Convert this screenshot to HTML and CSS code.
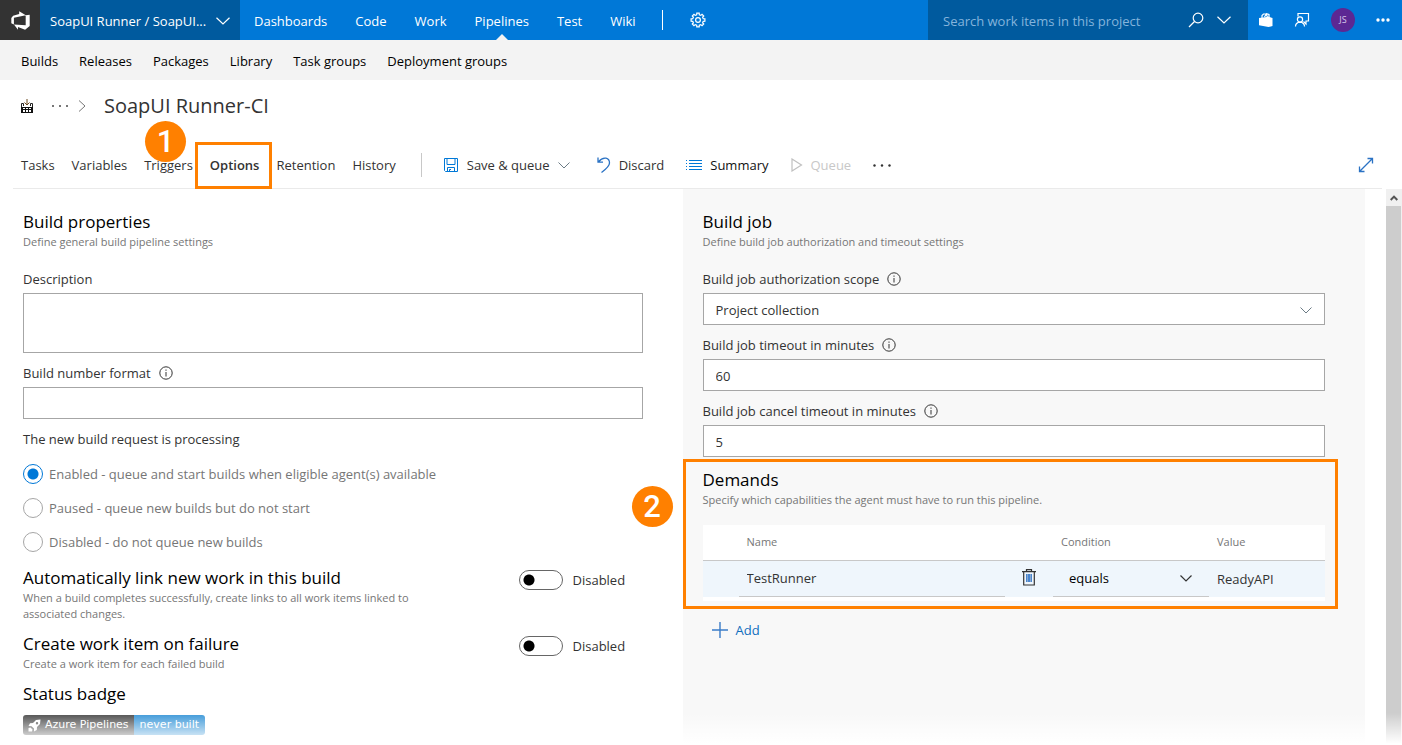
FILE: index.html
```
<!DOCTYPE html>
<html lang="en">
<head>
<meta charset="utf-8">
<title>SoapUI Runner-CI - Azure Pipelines</title>
<link rel="stylesheet" href="styles.css">
</head>
<body>
<header class="topbar">
  <a class="logo" href="#" aria-label="Azure DevOps">
    <svg width="21" height="21" viewBox="0 0 16 16"><path fill="#fff" d="M15 3.622v8.512L11.500 15l-5.425-1.975v1.958L3.004 10.970l8.951.7V4.005L15 3.622zm-2.984.428L6.994 1v2.001L2.382 4.356 1 6.130v4.029l1.978.873V5.869l9.038-1.818z"/></svg>
  </a>
  <button class="project" type="button">SoapUI Runner / SoapUI...
    <svg width="14" height="8" viewBox="0 0 14 8"><path class="line" d="M.5.7 7 7 13.500.7"/></svg>
  </button>
  <nav class="hubs">
    <a href="#">Dashboards</a>
    <a href="#">Code</a>
    <a href="#">Work</a>
    <a href="#" class="hub-current">Pipelines</a>
    <a href="#">Test</a>
    <a href="#">Wiki</a>
  </nav>
  <span class="hub-rule"></span>
  <button class="icon-button" type="button" aria-label="Settings">
    <svg width="16" height="16" viewBox="-8 -8 16 16"><path class="line" d="M5.200-1.300 6.900-1.200V1.200L5.200 1.300 4.600 2.760 5.730 4.030 4.030 5.730 2.760 4.600 1.300 5.200 1.200 6.900H-1.200L-1.300 5.200-2.760 4.600-4.030 5.730-5.730 4.030-4.600 2.760-5.200 1.300-6.900 1.200V-1.200L-5.200-1.300-4.600-2.760-5.730-4.030-4.030-5.730-2.760-4.600-1.300-5.200-1.200-6.900H1.200L1.300-5.200 2.760-4.600 4.030-5.730 5.730-4.030 4.600-2.760z"/><circle r="2.400" class="line"/></svg>
  </button>
  <form class="search">
    <input type="text" placeholder="Search work items in this project" aria-label="Search work items in this project">
    <button type="button" aria-label="Search"><svg width="16" height="16" viewBox="0 0 16 16"><circle class="line" cx="10" cy="6" r="4.800"/><path class="line" d="M6.500 9.500 1 15"/></svg></button>
    <button type="button" aria-label="Search options"><svg width="14" height="8" viewBox="0 0 14 8"><path class="line" d="M.5.7 7 7 13.500.7"/></svg></button>
  </form>
  <div class="account">
    <button class="icon-button" type="button" aria-label="Marketplace"><svg width="14" height="14" viewBox="0 0 14 14"><path fill="#fff" d="M0 5 9.500 3.700 13.500 5V13L9.500 14 0 12.200z"/><path class="line" d="M3 5V2.500L4.500 1H7l1.500 3M5.500 4 7.500.8 10 1.500V4"/></svg></button>
    <button class="icon-button" type="button" aria-label="Feedback"><svg width="16" height="16" viewBox="0 0 16 16"><path class="line" d="M4 4.500V1.500h10.500V9H12v3L9.500 9.500"/><circle class="line" cx="6" cy="7.500" r="2.600"/><path class="line" d="M1.500 14.500q0-4 4.500-4.400 4.500.4 4.500 4.400"/></svg></button>
    <button class="avatar" type="button">JS</button>
    <button class="icon-button" type="button" aria-label="More"><svg width="14" height="4" viewBox="0 0 14 4"><g fill="#fff"><circle cx="2" cy="2" r="1.700"/><circle cx="7" cy="2" r="1.700"/><circle cx="12" cy="2" r="1.700"/></g></svg></button>
  </div>
</header>

<nav class="subnav">
  <a href="#">Builds</a>
  <a href="#">Releases</a>
  <a href="#">Packages</a>
  <a href="#">Library</a>
  <a href="#">Task groups</a>
  <a href="#">Deployment groups</a>
</nav>

<div class="crumbs">
  <svg width="14" height="16" viewBox="0 0 14 16"><path fill="#111" fill-rule="evenodd" d="M1 9h12v6H1zM3 10v1h2v-1zm3 0v1h2v-1zm3 0v1h2v-1zM3 12v2h2v-2zm3 0v2h2v-2zm3 0v2h2v-2z"/><path fill="none" stroke="#222" d="M1.500 9V5.500h2V8M12.500 9V5.500h-2V8"/><path fill="none" stroke="#6d4a20" d="M7 1v6M4.500 4.500 7 7l2.500-2.500"/></svg>
  <button class="crumb-more" type="button" aria-label="Show path"><svg width="16" height="2" viewBox="0 0 16 2"><path fill="#777" d="M0 0h2v2H0zM7 0h2v2H7zM14 0h2v2h-2z"/></svg></button>
  <svg width="8" height="12" viewBox="0 0 8 12"><path fill="none" stroke="#777" d="m1 .5 6 5.500-6 5.500"/></svg>
  <h1>SoapUI Runner-CI</h1>
</div>

<div class="toolbar">
  <nav class="tabs">
    <a href="#">Tasks</a>
    <a href="#">Variables</a>
    <a href="#">Triggers<span class="step step-one">1</span></a>
    <a href="#" class="tab-current">Options<span class="frame frame-tab"></span></a>
    <a href="#">Retention</a>
    <a href="#">History</a>
  </nav>
  <span class="toolbar-rule"></span>
  <div class="commands">
    <button type="button" class="menu-command"><svg width="16" height="16" viewBox="0 0 16 16"><path class="blue" d="M1.500 1.500h13v13h-12l-1-1zM4 1.500v6h8v-6M4.500 14.500v-4h7v4M6.500 14.500V12.500H8"/></svg>Save &amp; queue<svg width="12" height="7" viewBox="0 0 12 7"><path fill="none" stroke="#6b7b85" d="m.5.5 5.500 5.500L11.500.5"/></svg></button>
    <button type="button"><svg width="14" height="18" viewBox="0 0 14 18"><path class="blue wide" d="M1 1.500V6.200h5M1.300 6Q5 1.500 9 2.200 12.500 3 12.500 7q0 3.500-8 9.500"/></svg>Discard</button>
    <button type="button" class="strong"><svg width="16" height="12" viewBox="0 0 16 12"><path class="blue" d="M3 1.500h13M3 4.500h13M3 7.500h13M3 10.500h13M0 1.500h1M0 4.500h1M0 7.500h1M0 10.500h1"/></svg>Summary</button>
    <button type="button" disabled><svg width="12" height="14" viewBox="0 0 12 14"><path fill="none" stroke="#c0c0c0" stroke-width="1.200" d="M1 1v12l9.500-6z"/></svg>Queue</button>
    <button type="button" aria-label="More actions"><svg width="18" height="3" viewBox="0 0 18 3"><g fill="#333"><circle cx="1.500" cy="1.500" r="1.200"/><circle cx="9" cy="1.500" r="1.200"/><circle cx="16.500" cy="1.500" r="1.200"/></g></svg></button>
  </div>
  <button class="expand" type="button" aria-label="Full screen"><svg width="16" height="16" viewBox="0 0 16 16"><path class="blue wide" d="M1.500 14.500l13-13M9.500 1.500h5v5M1.500 9.500v5h5"/></svg></button>
</div>

<main class="content">
  <section class="panel">
    <h2>Build properties</h2>
    <p class="hint">Define general build pipeline settings</p>
    <div class="fields">
      <div class="field">
        <label for="description">Description</label>
        <textarea id="description"></textarea>
      </div>
      <div class="field">
        <label for="format">Build number format <svg class="info" viewBox="0 0 14 14"><circle cx="7" cy="7" r="6.200"/><path d="M7 6v4.500M7 3.500v1.300"/></svg></label>
        <input id="format" type="text">
      </div>
    </div>
    <fieldset class="choices">
      <legend>The new build request is processing</legend>
      <label><input type="radio" name="processing" checked>Enabled - queue and start builds when eligible agent(s) available</label>
      <label><input type="radio" name="processing">Paused - queue new builds but do not start</label>
      <label><input type="radio" name="processing">Disabled - do not queue new builds</label>
    </fieldset>
    <div class="options">
      <div class="option">
        <div class="option-text">
          <h2>Automatically link new work in this build</h2>
          <p class="hint">When a build completes successfully, create links to all work items linked to associated changes.</p>
        </div>
        <label class="switch"><input type="checkbox" role="switch">Disabled</label>
      </div>
      <div class="option">
        <div class="option-text">
          <h2>Create work item on failure</h2>
          <p class="hint">Create a work item for each failed build</p>
        </div>
        <label class="switch"><input type="checkbox" role="switch">Disabled</label>
      </div>
      <div>
        <h2>Status badge</h2>
        <div class="badge">
          <span class="badge-name"><svg width="13" height="13" viewBox="0 0 13 13"><path fill="#fff" fill-rule="evenodd" d="M12.500.5 8 1 5 4 2 4.200.5 7 3.500 7.200 6 9.500 6 12.500 8.800 11 9 8 12 5zM9 3a1.200 1.200 0 1 1 0 2.400A1.200 1.200 0 0 1 9 3zM2.500 8.500.5 9v3.500h3.500l.5-2z"/></svg>Azure Pipelines</span><span class="badge-state">never built</span>
        </div>
      </div>
    </div>
  </section>

  <section class="panel panel-job">
    <h2>Build job</h2>
    <p class="hint">Define build job authorization and timeout settings</p>
    <div class="fields">
      <div class="field">
        <label for="scope">Build job authorization scope <svg class="info" viewBox="0 0 14 14"><circle cx="7" cy="7" r="6.200"/><path d="M7 6v4.500M7 3.500v1.300"/></svg></label>
        <div class="select">
          <select id="scope"><option>Project collection</option></select>
          <svg width="12" height="7" viewBox="0 0 12 7"><path fill="none" stroke="#6b7b85" d="m.5.5 5.500 5.500L11.500.5"/></svg>
        </div>
      </div>
      <div class="field">
        <label for="timeout">Build job timeout in minutes <svg class="info" viewBox="0 0 14 14"><circle cx="7" cy="7" r="6.200"/><path d="M7 6v4.500M7 3.500v1.300"/></svg></label>
        <input id="timeout" type="text" value="60">
      </div>
      <div class="field">
        <label for="cancel">Build job cancel timeout in minutes <svg class="info" viewBox="0 0 14 14"><circle cx="7" cy="7" r="6.200"/><path d="M7 6v4.500M7 3.500v1.300"/></svg></label>
        <input id="cancel" type="text" value="5">
      </div>
    </div>
    <div class="demands">
      <h2>Demands</h2>
      <p class="hint">Specify which capabilities the agent must have to run this pipeline.</p>
      <table>
        <colgroup><col class="col-mark"><col><col class="col-delete"><col class="col-condition"><col class="col-value"></colgroup>
        <thead>
          <tr><th></th><th scope="col">Name</th><th></th><th scope="col">Condition</th><th scope="col">Value</th></tr>
        </thead>
        <tbody>
          <tr>
            <td></td>
            <td><input class="cell cell-line" type="text" value="TestRunner" aria-label="Name"></td>
            <td><button class="delete" type="button" aria-label="Delete"><svg width="14" height="17" viewBox="0 0 14 17"><path fill="none" stroke="#333" stroke-width="1.200" d="M0 2.600h14M4.500 2.500V.7h5v1.800M1.700 3v13h10.600V3"/><path fill="#4a86cf" d="M4 5h6v8H4z"/><path fill="none" stroke="#89a9cf" d="M5.500 5v8M8.500 5v8"/></svg></button></td>
            <td>
              <div class="select cell-line">
                <select aria-label="Condition"><option>equals</option></select>
                <svg width="12" height="7" viewBox="0 0 12 7"><path fill="none" stroke="#333" stroke-width="1.200" d="m.5.5 5.500 5.500L11.500.5"/></svg>
              </div>
            </td>
            <td><input class="cell" type="text" value="ReadyAPI" aria-label="Value"></td>
          </tr>
        </tbody>
      </table>
      <span class="frame frame-demands"></span>
      <span class="step step-two">2</span>
    </div>
    <button class="add" type="button"><svg width="16" height="16" viewBox="0 0 16 16"><path fill="none" stroke="#3a7cc8" stroke-width="1.400" d="M8 0v16M0 8h16"/></svg>Add</button>
  </section>

  <div class="scrollbar">
    <button type="button" aria-label="Scroll up"><svg width="8" height="6" viewBox="0 0 8 6"><path fill="none" stroke="#555" stroke-width="2" d="m.7 5 3.300-3.400L7.300 5"/></svg></button>
    <div class="thumb"></div>
  </div>
  <div class="fade"></div>
</main>
</body>
</html>
```
FILE: styles.css
```
* { box-sizing: border-box; }

body {
  margin: 0;
  min-height: 100vh;
  display: flex;
  flex-direction: column;
  background: #fff;
  color: #333;
  font: 13px/20px "Open Sans", "Noto Sans", sans-serif;
}

h1, h2, p { margin: 0; font-weight: 400; }
a { color: inherit; text-decoration: none; }
svg { display: block; flex: none; }

button, input, select, textarea {
  margin: 0;
  padding: 0;
  border: 0;
  border-radius: 0;
  background: none;
  color: inherit;
  font: inherit;
}

.line { fill: none; stroke: #fff; stroke-width: 1.2; }
.blue { fill: none; stroke: #0078d7; }
.wide { stroke: #2a72c4; stroke-width: 1.3; }

/* Top bar */
.topbar {
  display: flex;
  align-items: center;
  height: 40px;
  background: #0078d7;
  color: #fff;
}
.logo {
  display: grid;
  place-items: center;
  width: 40px;
  height: 40px;
  background: #333;
}
.project {
  display: flex;
  align-items: center;
  justify-content: space-between;
  width: 200px;
  height: 40px;
  padding: 2px 10px 0;
  background: #005a9e;
  white-space: nowrap;
}
.hubs { display: flex; }
.hubs a {
  position: relative;
  padding: 11px 14px 9px;
}
.hub-current::after {
  content: "";
  position: absolute;
  left: 50%;
  bottom: 0;
  margin-left: -6px;
  border: 6px solid transparent;
  border-top: 0;
  border-bottom-color: #f3f3f3;
}
.hub-rule {
  width: 1px;
  height: 20px;
  margin: 0 27px 0 12px;
  background: #fff;
}
.search {
  display: flex;
  align-items: center;
  gap: 13px;
  width: 320px;
  height: 40px;
  margin-left: auto;
  padding: 0 17px 0 15px;
  background: #005a9e;
}
.search input {
  flex: 1;
  min-width: 0;
  height: 40px;
  padding-top: 2px;
}
.search input::placeholder { color: #84b4dc; opacity: 1; }
.account {
  display: flex;
  align-items: center;
  justify-content: space-between;
  width: 154px;
  padding: 0 12px 0 11px;
}
.avatar {
  width: 24px;
  height: 24px;
  border-radius: 50%;
  background: #5c2893;
  color: #d9c8ea;
  font-size: 9px;
  line-height: 24px;
}

.subnav {
  display: flex;
  gap: 21px;
  height: 40px;
  padding: 11px 21px 0;
  background: #f3f3f3;
  color: #000;
}

/* Title and tabs */
.crumbs {
  display: flex;
  align-items: center;
  height: 52px;
  padding-left: 20px;
}
.crumb-more { margin: 0 10px 0 18px; }
.crumbs h1 {
  margin-left: 18px;
  font-size: 20px;
  line-height: 28px;
}
.toolbar {
  display: flex;
  align-items: center;
  height: 57px;
  margin: 0 20px 0 13px;
  padding: 10px 8px 0;
  border-bottom: 1px solid #eaeaea;
}
.tabs { display: flex; gap: 17px; }
.tabs a { position: relative; }
.tab-current { font-weight: 600; }
.toolbar-rule {
  width: 1px;
  height: 24px;
  margin: 0 21px 0 25px;
  background: #c8c8c8;
}
.commands { display: flex; gap: 22px; }
.commands button {
  display: flex;
  align-items: center;
  gap: 8px;
}
.commands .menu-command { padding-right: 5px; }
.commands .strong { color: #111; }
.commands :disabled { color: #c8c8c8; }
.expand { margin-left: auto; }

/* Numbered callouts */
.frame {
  position: absolute;
  border: 3px solid #ff8000;
  pointer-events: none;
}
.frame-tab { inset: -13px -13px -14px -15px; }
.step {
  position: absolute;
  width: 41px;
  height: 41px;
  border-radius: 50%;
  background: #ff8000;
  color: #fff;
  font: 500 31px/42px Roboto, "Open Sans", sans-serif;
  text-align: center;
}
.step-one { left: 1px; bottom: 13px; }

/* Panels */
.content {
  position: relative;
  flex: 1;
  display: grid;
  grid-template-columns: 1fr 1fr 37px;
}
.panel { padding: 21px 40px 10px 23px; }
.panel-job {
  padding-left: 20px;
  background: #f8f8f8;
}
h2 {
  color: #000;
  font-size: 17px;
  line-height: 24px;
}
.hint {
  color: #767676;
  font-size: 11px;
  line-height: 16px;
}
.fields {
  display: grid;
  gap: 10px;
  margin-top: 19px;
}
.field { display: grid; gap: 4px; }
.field label {
  display: flex;
  align-items: center;
  gap: 8px;
}
.info {
  width: 14px;
  height: 14px;
  fill: none;
  stroke: #333;
}
.field input, .field textarea, .field .select {
  width: 100%;
  height: 32px;
  padding: 2px 12px 0;
  border: 1px solid #a6a6a6;
  background: #fff;
}
.field textarea { height: 60px; resize: none; display: block; }
.select {
  display: flex;
  align-items: center;
}
.select select {
  flex: 1;
  height: 28px;
  appearance: none;
}

.choices {
  display: grid;
  gap: 14px;
  margin: 10px 0 14px;
  padding: 0;
  border: 0;
  color: #767676;
}
.choices legend { padding: 0 0 15px; color: #333; }
.choices label {
  display: flex;
  align-items: center;
  gap: 6px;
}
.choices input {
  appearance: none;
  width: 20px;
  height: 20px;
  border: 1px solid #a6a6a6;
  border-radius: 50%;
}
.choices input:checked {
  border-color: #0078d7;
  background: radial-gradient(circle, #0078d7 5px, #fff 6px);
}

.options { display: grid; gap: 10px; }
.option { display: flex; justify-content: space-between; }
.option-text { max-width: 420px; }
.switch {
  display: flex;
  gap: 10px;
  width: 124px;
  padding-top: 4px;
}
.switch input {
  appearance: none;
  width: 44px;
  height: 20px;
  border: 1px solid #666;
  border-radius: 10px;
  background: radial-gradient(circle at 9px 9px, #000 5px, #fff 6px);
}

.badge {
  display: inline-flex;
  margin-top: 9px;
  border-radius: 3px;
  overflow: hidden;
  color: #fff;
  font: 11px/20px "DejaVu Sans", sans-serif;
}
.badge-name {
  display: flex;
  align-items: center;
  gap: 4px;
  padding: 0 5px;
  background: #4d4d4d;
}
.badge-state { padding: 0 6px; background: #3a97d8; }

/* Demands */
.demands { position: relative; margin-top: 11px; }
.frame-demands { inset: -9px -13px -8px -20px; }
.step-two { top: 18px; left: -71px; }
table {
  width: 100%;
  margin-top: 17px;
  border-collapse: collapse;
  border-bottom: 4px solid #fff;
  table-layout: fixed;
  background: #fff;
}
.col-mark { width: 36px; }
.col-delete { width: 48px; }
.col-condition { width: 156px; }
.col-value { width: 116px; }
th {
  height: 35px;
  padding: 0 8px;
  border-bottom: 1px solid #c8c8c8;
  color: #767676;
  font-size: 11px;
  font-weight: 400;
  text-align: left;
}
td {
  padding: 0;
  background: #eff6fc;
}
.cell {
  display: block;
  width: 100%;
  height: 36px;
  padding: 0 8px;
}
.cell-line { border-bottom: 1px solid #c8c8c8; }
td .select {
  height: 36px;
  padding: 0 17px 0 16px;
  color: #000;
}
.delete { display: block; margin: 0 auto; }
.delete svg { margin-bottom: 3px; }
.add {
  display: flex;
  align-items: center;
  gap: 8px;
  margin: 19px 0 0 9px;
  color: #106ebe;
}

/* Scroll bar and bottom fade */
.scrollbar {
  display: flex;
  flex-direction: column;
  margin-left: 21px;
  border-right: 1px solid #f0f0f0;
}
.scrollbar button {
  display: grid;
  place-items: center;
  height: 17px;
  background: #f0f0f0;
}
.thumb { flex: 1; background: #cdcdcd; }
.fade {
  position: absolute;
  inset: auto 0 0;
  height: 34px;
  background: linear-gradient(rgba(255, 255, 255, 0), #fff 90%);
  pointer-events: none;
}
```
